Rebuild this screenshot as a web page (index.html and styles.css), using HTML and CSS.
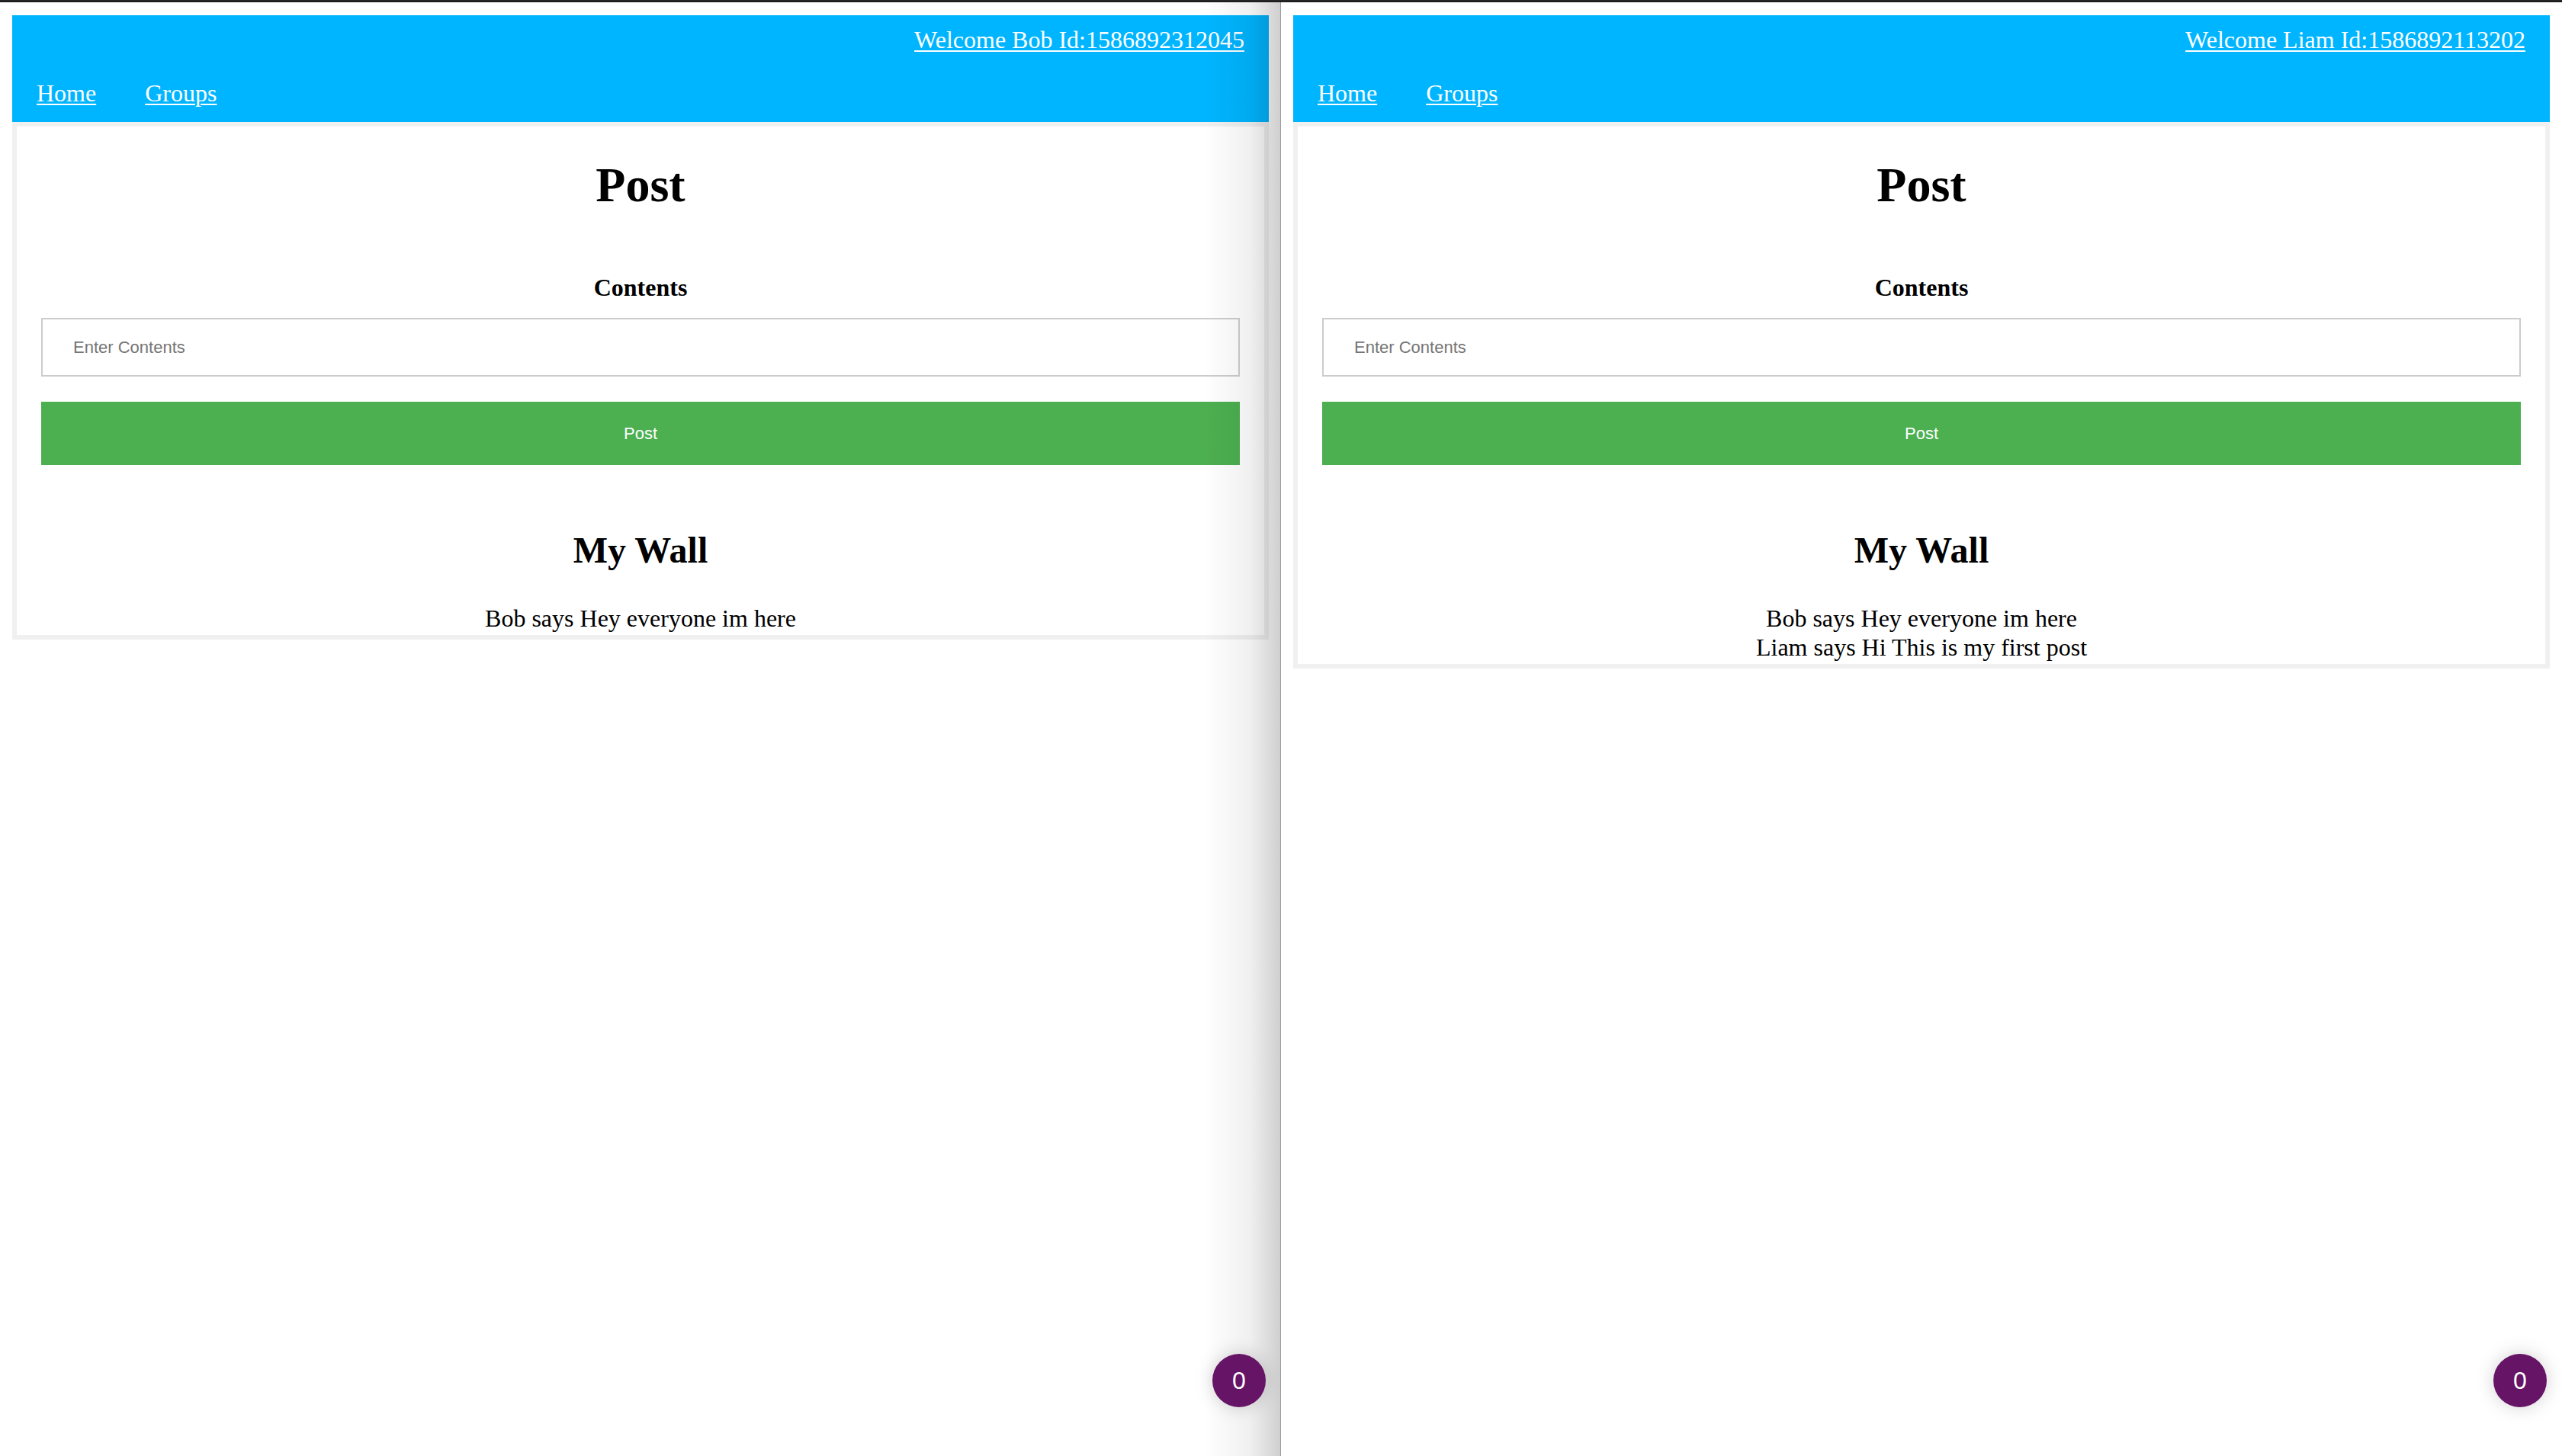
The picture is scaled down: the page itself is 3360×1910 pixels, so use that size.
FILE: index.html
```html
<!DOCTYPE html>
<html>
<head>
<meta charset="utf-8">
<link rel="stylesheet" href="styles.css">
</head>
<body>
<div class="topbar"></div>
<div class="screens">
  <div class="window window-left">
    <header class="header">
      <div class="welcome"><a href="#">Welcome Bob Id:1586892312045</a></div>
      <nav class="nav"><a href="#">Home</a><a href="#">Groups</a></nav>
    </header>
    <main class="card">
      <h1 class="title">Post</h1>
      <label class="label">Contents</label>
      <input class="field" type="text" placeholder="Enter Contents">
      <button class="btn">Post</button>
      <h2 class="wall-title">My Wall</h2>
      <div class="posts">
        <div>Bob says Hey everyone im here</div>
      </div>
    </main>
    <div class="shade"></div>
    <div class="badge">0</div>
  </div>
  <div class="divider"></div>
  <div class="window window-right">
    <header class="header">
      <div class="welcome"><a href="#">Welcome Liam Id:1586892113202</a></div>
      <nav class="nav"><a href="#">Home</a><a href="#">Groups</a></nav>
    </header>
    <main class="card">
      <h1 class="title">Post</h1>
      <label class="label">Contents</label>
      <input class="field" type="text" placeholder="Enter Contents">
      <button class="btn">Post</button>
      <h2 class="wall-title">My Wall</h2>
      <div class="posts">
        <div>Bob says Hey everyone im here</div>
        <div>Liam says Hi This is my first post</div>
      </div>
    </main>
    <div class="badge">0</div>
  </div>
</div>
</body>
</html>
```
FILE: styles.css
```css
html, body {
  margin: 0;
  padding: 0;
  background: #ffffff;
}
body {
  font-family: "Liberation Serif", "Times New Roman", serif;
  width: 3360px;
  height: 1910px;
  overflow: hidden;
}
.topbar {
  height: 3px;
  background: linear-gradient(#2a2a2a, #161616);
}
.screens {
  display: flex;
  height: 1907px;
}
.window {
  position: relative;
  box-sizing: border-box;
  padding: 17px 16px 0;
  background: #ffffff;
}
.window-left {
  width: 1679px;
  padding-right: 15px;
}
.window-right {
  width: 1680px;
}
.divider {
  width: 1px;
  background: #9c9c9c;
}
.header {
  background: #00b5ff;
  color: #ffffff;
  height: 140px;
  box-sizing: border-box;
  padding-top: 15px;
}
.header a {
  color: #ffffff;
  text-decoration: underline;
  text-decoration-thickness: 2px;
  text-underline-offset: 3px;
}
.welcome {
  font-size: 32px;
  line-height: 35px;
  text-align: right;
  padding-right: 32px;
}
.nav {
  display: flex;
  font-size: 32px;
  line-height: 35px;
  margin-top: 35px;
}
.nav a {
  padding: 0 32px;
}
.card {
  display: flex;
  flex-direction: column;
  align-items: stretch;
  text-align: center;
  border: 6px solid #f0f0f0;
  padding: 0 32px 3px;
  background: #ffffff;
}
.title {
  margin: 41px 0 0;
  font-size: 64px;
  line-height: 72px;
  font-weight: bold;
}
.label {
  margin-top: 80px;
  font-size: 32px;
  line-height: 36px;
  font-weight: bold;
}
.field {
  margin-top: 22px;
  height: 77px;
  box-sizing: border-box;
  border: 2px solid #cccccc;
  padding: 0 0 0 40px;
  font-family: "Liberation Sans", Arial, sans-serif;
  font-size: 22px;
  color: #333333;
  outline: none;
}
.field::placeholder {
  color: #757575;
}
.btn {
  margin-top: 33px;
  height: 83px;
  border: none;
  background: #4caf50;
  color: #ffffff;
  font-family: "Liberation Sans", Arial, sans-serif;
  font-size: 22px;
}
.wall-title {
  margin: 85px 0 0;
  font-size: 48px;
  line-height: 54px;
  font-weight: bold;
}
.posts {
  margin-top: 43px;
  font-size: 32px;
  line-height: 38px;
}
.shade {
  position: absolute;
  top: 0;
  right: 0;
  bottom: 0;
  width: 100px;
  background: linear-gradient(to right, rgba(0,0,0,0), rgba(0,0,0,0.06) 60%, rgba(0,0,0,0.19));
  pointer-events: none;
}
.badge {
  position: absolute;
  right: 20px;
  bottom: 64px;
  width: 70px;
  height: 70px;
  border-radius: 50%;
  background: #661466;
  color: #ffffff;
  font-family: "Liberation Sans", Arial, sans-serif;
  font-size: 32px;
  display: flex;
  align-items: center;
  justify-content: center;
  box-shadow: 0 0 24px rgba(0,0,0,0.18);
}
.window-left .badge {
  right: 19px;
}
```
